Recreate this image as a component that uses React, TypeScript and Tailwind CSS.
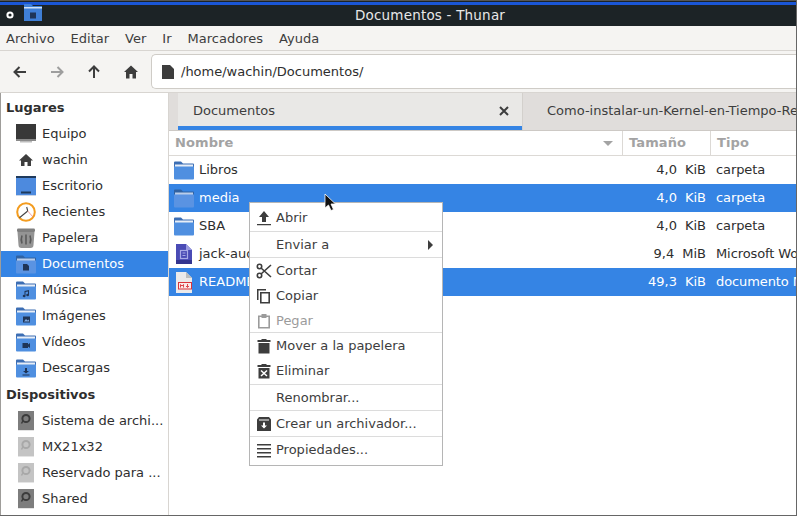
import type { ReactNode } from "react";

const FONT = "font-['DejaVu_Sans',sans-serif]";

const Folder = ({ glyph, dim }: { glyph?: ReactNode; dim?: boolean }) => (
  <svg width="20" height="20" viewBox="0 0 20 20" className="shrink-0">
    <path d="M0 2.5 A1 1 0 0 1 1 1.5 H7 L9 3.5 H19 A1 1 0 0 1 20 4.5 V9 H0 Z" fill={dim ? "#2f62a3" : "#3c6eb4"} />
    <rect x="1" y="4.5" width="18" height="2.5" fill={dim ? "#b9cdea" : "#e8eef7"} />
    <path d="M0 6.5 H20 V18.5 A1 1 0 0 1 19 19.5 H1 A1 1 0 0 1 0 18.5 Z" fill={dim ? "#5a93e2" : "#4f8fe0"} />
    {glyph && <g transform="translate(0 .5)">{glyph}</g>}
  </svg>
);

const DocGlyph = <path d="M7 9.5 H11 L13 11.5 V16 H7 Z" fill="#1f3557" />;
const MusicGlyph = <path d="M8.5 10.5 L13 9.5 V14.5 A1.4 1.2 0 1 1 12 13.4 V11 L9.5 11.5 V15.5 A1.4 1.2 0 1 1 8.5 14.4 Z" fill="#1f3557" />;
const ImageGlyph = <g><rect x="7" y="10" width="7" height="6" fill="#1f3557" /><path d="M8 15 L10 12.5 L11.5 14 L12.5 13 L13.5 15 Z" fill="#7fa8e0" /></g>;
const VideoGlyph = <path d="M6.5 10.5 H12 V12 L14 10.5 V15.5 L12 14 V15.5 H6.5 Z" fill="#1f3557" />;
const DownloadGlyph = <path d="M9 9.5 H11 V12.5 H13 L10 15 L7 12.5 H9 Z M6.5 16 H13.5 V17 H6.5 Z" fill="#1f3557" />;

const Drive = ({ light }: { light?: boolean }) => (
  <svg width="20" height="20" viewBox="0 0 20 20" className="shrink-0">
    <rect x="2" y="0" width="16" height="19" fill={light ? "#c4c4c4" : "#7d7d7d"} />
    <rect x="2" y="19" width="16" height="1" fill="#e4e4e4" />
    <circle cx="10" cy="7.5" r="3.6" fill="none" stroke={light ? "#a8a8a8" : "#3c3c3c"} strokeWidth="2" />
    <path d="M6.8 10 L5.5 12.5" stroke={light ? "#a8a8a8" : "#3c3c3c"} strokeWidth="1.5" />
  </svg>
);

const PlaceIcons: Record<string, ReactNode> = {
  equipo: (
    <svg width="20" height="20" viewBox="0 0 20 20" className="shrink-0">
      <rect y="0" width="20" height="15" fill="#383838" />
      <rect y="15" width="20" height="2" fill="#8a8a8a" />
      <rect x="4" y="17" width="12" height="1.5" fill="#bcbcbc" />
    </svg>
  ),
  home: (
    <svg width="20" height="20" viewBox="0 0 20 20" className="shrink-0">
      <path d="M10 4 L17 10.5 H15 V16 H11.5 V12 H8.5 V16 H5 V10.5 H3 Z" fill="#3e3e3e" />
    </svg>
  ),
  desktop: (
    <svg width="20" height="20" viewBox="0 0 20 20" className="shrink-0">
      <rect width="20" height="19" fill="#4d8ade" />
      <rect width="20" height="2" fill="#1f3a5c" />
      <rect x="5" y="15.5" width="10" height="2" fill="#1f3a5c" />
      <rect y="19" width="20" height="1" fill="#c8d4e6" />
    </svg>
  ),
  recent: (
    <svg width="20" height="20" viewBox="0 0 20 20" className="shrink-0">
      <circle cx="10" cy="10" r="8.8" fill="#fff" stroke="#f39c1f" strokeWidth="2" />
      <path d="M11.7 9 L3.5 15.7 M11.7 9 L10.7 5" stroke="#444" strokeWidth="1.1" />
      <path d="M11.7 9 L17 15" stroke="#e88" strokeWidth="0.8" />
    </svg>
  ),
  trash: (
    <svg width="20" height="20" viewBox="0 0 20 20" className="shrink-0">
      <rect x="1" y="0.5" width="18" height="3.5" rx="1.2" fill="#7f7f7f" />
      <path d="M1.5 4 H18.5 L17.5 17 A3 3 0 0 1 14.5 20 H5.5 A3 3 0 0 1 2.5 17 Z" fill="#949494" />
      <path d="M10 6.5 V16.5 M6 7.5 Q4.5 11.5 6 15.5 M14 7.5 Q15.5 11.5 14 15.5" fill="none" stroke="#5a5a5a" strokeWidth="1.6" />
    </svg>
  ),
};

const places = [
  { label: "Equipo", icon: PlaceIcons.equipo },
  { label: "wachin", icon: PlaceIcons.home },
  { label: "Escritorio", icon: PlaceIcons.desktop },
  { label: "Recientes", icon: PlaceIcons.recent },
  { label: "Papelera", icon: PlaceIcons.trash },
  { label: "Documentos", icon: <Folder dim glyph={DocGlyph} />, active: true },
  { label: "Música", icon: <Folder glyph={MusicGlyph} /> },
  { label: "Imágenes", icon: <Folder glyph={ImageGlyph} /> },
  { label: "Vídeos", icon: <Folder glyph={VideoGlyph} /> },
  { label: "Descargas", icon: <Folder glyph={DownloadGlyph} /> },
];

const devices = [
  { label: "Sistema de archi...", light: false },
  { label: "MX21x32", light: true },
  { label: "Reservado para ...", light: true },
  { label: "Shared", light: false },
];

const DocFile = () => (
  <svg width="20" height="22" viewBox="0 0 20 22" className="shrink-0">
    <path d="M2 1 H12 L18 7 V21 H2 Z" fill="#4a4bb5" />
    <path d="M12 1 L18 7 H12 Z" fill="#9a9be0" />
    <rect x="2" y="17" width="16" height="4" fill="#34358f" />
    <rect x="6.5" y="7.5" width="7" height="8" fill="none" stroke="#a9aae6" strokeWidth="1.2" />
    <path d="M8.5 10 H11.5 M8.5 12.5 H11.5" stroke="#a9aae6" />
  </svg>
);

const MdFile = () => (
  <svg width="20" height="22" viewBox="0 0 20 22" className="shrink-0">
    <path d="M2 1 H12 L18 7 V22 H2 Z" fill="#eceaea" />
    <path d="M12 1 L18 7 H12 Z" fill="#bdbdbd" />
    <rect x="4.5" y="11.5" width="13" height="6.5" fill="#fbeaea" stroke="#d9353b" strokeWidth="1" />
    <path d="M6.5 16.5 V13.5 L8 15 L9.5 13.5 V16.5 M13.5 13 V16 M12 15 L13.5 16.5 L15 15" fill="none" stroke="#d9353b" strokeWidth="0.9" />
  </svg>
);

const files = [
  { name: "Libros", size: "4,0", unit: "KiB", type: "carpeta", icon: <Folder /> },
  { name: "media", size: "4,0", unit: "KiB", type: "carpeta", icon: <Folder dim />, selected: true },
  { name: "SBA", size: "4,0", unit: "KiB", type: "carpeta", icon: <Folder /> },
  { name: "jack-audio", size: "9,4", unit: "MiB", type: "Microsoft Word", icon: <DocFile /> },
  { name: "README.md", size: "49,3", unit: "KiB", type: "documento Markdown", icon: <MdFile />, selected: true },
];

const MenuIcon = ({ children }: { children: ReactNode }) => (
  <svg width="16" height="16" viewBox="0 0 16 16" className="shrink-0" fill="#3d3d3d">
    {children}
  </svg>
);

const MenuItem = ({ icon, label, disabled, arrow, h = "h-[25px]" }: { icon?: ReactNode; label: string; disabled?: boolean; arrow?: boolean; h?: string }) => (
  <div className={`flex items-center ${h} pl-[6px] pr-[9px] ${disabled ? "text-[#9b9b9b]" : "text-[#3d3d3d]"}`}>
    <span className="w-[20px] shrink-0 flex">{icon}</span>
    <span className="flex-1 whitespace-nowrap">{label}</span>
    {arrow && <span className="w-0 h-0 border-y-[5px] border-y-transparent border-l-[5px] border-l-[#3d3d3d]" />}
  </div>
);

const Sep = () => <div className="h-px bg-[#dcdcdc]" />;

const ContextMenu = () => (
  <div className="absolute left-[249px] top-[202px] w-[194px] h-[264px] bg-white border border-[#b5b5b5] text-[13px]">
    <MenuItem
      h="h-[28px] pt-[2px]"
      label="Abrir"
      icon={<MenuIcon><path d="M8 1 L13 7 H10 V12 H6 V7 H3 Z M1 14 H15 V15.3 H1 Z" /></MenuIcon>}
    />
    <Sep />
    <MenuItem label="Enviar a" arrow />
    <Sep />
    <MenuItem
      label="Cortar"
      icon={
        <MenuIcon>
          <g fill="none" stroke="#3d3d3d" strokeWidth="1.6">
            <circle cx="3.5" cy="3.5" r="2.2" />
            <circle cx="3.5" cy="12.5" r="2.2" />
            <path d="M5 5 L15 14 M5 11 L15 2" />
          </g>
        </MenuIcon>
      }
    />
    <MenuItem
      label="Copiar"
      icon={
        <MenuIcon>
          <path d="M1 1 H10 V2.5 H2.5 V12 H1 Z" />
          <path fillRule="evenodd" d="M4 4 H14 V15.5 H4 Z M5.6 5.6 V13.9 H12.4 V5.6 Z" />
        </MenuIcon>
      }
    />
    <MenuItem
      h="h-[24px] pt-[1px]"
      label="Pegar"
      disabled
      icon={
        <MenuIcon>
          <path fill="#9b9b9b" fillRule="evenodd" d="M2 2.5 H5.5 V1 H10.5 V2.5 H14 V15.5 H2 Z M3.6 4 V14 H12.4 V4 H10.5 V5 H5.5 V4 Z" />
        </MenuIcon>
      }
    />
    <Sep />
    <MenuItem
      h="h-[25px] pt-[1px]"
      label="Mover a la papelera"
      icon={<MenuIcon><path d="M5.5 1 H10.5 V2 H14.5 V4 H1.5 V2 H5.5 Z M2.5 5 H13.5 V15.5 H2.5 Z" /></MenuIcon>}
    />
    <MenuItem
      h="h-[26px]"
      label="Eliminar"
      icon={
        <MenuIcon>
          <path d="M5.5 1 H10.5 V2 H14.5 V4 H1.5 V2 H5.5 Z" />
          <path fillRule="evenodd" d="M2.5 5 H13.5 V15.5 H2.5 Z M5.5 7 L4.5 8 L7 10.2 L4.5 12.5 L5.5 13.5 L8 11.2 L10.5 13.5 L11.5 12.5 L9 10.2 L11.5 8 L10.5 7 L8 9.2 Z" />
        </MenuIcon>
      }
    />
    <Sep />
    <MenuItem label="Renombrar..." />
    <Sep />
    <MenuItem
      label="Crear un archivador..."
      icon={
        <MenuIcon>
          <path fillRule="evenodd" d="M3 1 H13 L15 3.5 V15 H1 V3.5 Z M3 3.5 H13 V4.5 H3 Z M7 6.5 V9.5 H5 L8 12.5 L11 9.5 H9 V6.5 Z" />
        </MenuIcon>
      }
    />
    <Sep />
    <MenuItem
      h="h-[28px] pb-[3px]"
      label="Propiedades..."
      icon={<MenuIcon><path d="M1 2 H15 V3.5 H1 Z M1 6 H15 V7.5 H1 Z M1 10 H15 V11.5 H1 Z M1 14 H15 V15.5 H1 Z" /></MenuIcon>}
    />
  </div>
);

export default function App() {
  return (
    <div className={`relative w-[797px] h-[516px] overflow-hidden flex flex-col bg-white border-r border-b border-[#666] text-[13px] ${FONT}`}>
      {/* window frame */}
      <div className="h-[1px] bg-[#555]" />
      <div className="h-[1px] bg-[#1c2326]" />
      <div className="h-[3px] bg-[#1a56d6]" />
      <div className="h-[21px] relative bg-[#1c2326] flex items-center justify-center pl-[64px] text-[#e8e8e8] text-[13.5px]">
        <svg width="10" height="10" viewBox="0 0 10 10" className="absolute left-[5px] top-[5px]">
          <circle cx="5" cy="5" r="2.6" fill="none" stroke="#fff" strokeWidth="2" />
        </svg>
        <svg width="18" height="18" viewBox="0 0 18 18" className="absolute left-[24px] -top-[1px]">
          <path d="M0 0 H7 L9 2 H18 V17 H0 Z" fill="#3f7fd6" />
          <rect x="0" y="3" width="18" height="1.5" fill="#cfe0f5" />
          <rect x="6" y="8.5" width="6" height="6" fill="#1f3557" />
        </svg>
        <span className="tracking-[0.2px]">Documentos - Thunar</span>
      </div>

      {/* menu */}
      <div className="h-[25px] flex items-center gap-[16px] pl-[6px] pt-[1px] bg-[#f5f4f2] text-[#3d3d3d] border-b border-[#d8d5d1]">
        {["Archivo", "Editar", "Ver", "Ir", "Marcadores", "Ayuda"].map((m) => (
          <span key={m}>{m}</span>
        ))}
      </div>

      {/* toolbar */}
      <div className="h-[42px] flex items-center bg-[#f5f4f2] border-b border-[#d8d5d1] pl-[12px]">
        <svg width="16" height="16" viewBox="0 0 16 16" fill="none" stroke="#3d3d3d" strokeWidth="2">
          <path d="M14 8 H3 M7.5 3 L2.5 8 L7.5 13" />
        </svg>
        <svg width="16" height="16" viewBox="0 0 16 16" fill="none" stroke="#9e9e9e" strokeWidth="2" className="ml-[21px]">
          <path d="M2 8 H13 M8.5 3 L13.5 8 L8.5 13" />
        </svg>
        <svg width="16" height="16" viewBox="0 0 16 16" fill="none" stroke="#3d3d3d" strokeWidth="2" className="ml-[21px]">
          <path d="M8 14 V3 M3 7.5 L8 2.5 L13 7.5" />
        </svg>
        <svg width="16" height="16" viewBox="0 0 16 16" fill="#3d3d3d" className="ml-[21px]">
          <path d="M8 1.5 L15 8 H13 V14.5 H9.5 V10 H6.5 V14.5 H3 V8 H1 Z" />
        </svg>
        <div className="ml-[12px] flex-1 h-[35px] flex items-center bg-white border border-r-0 border-[#cfccc7] rounded-l-[5px] pl-[9px] text-[#2e2e2e] text-[13px]">
          <svg width="14" height="16" viewBox="0 0 14 16" fill="#3d3d3d" className="shrink-0">
            <path d="M1 1 H9 L13 5 V15 H1 Z" />
          </svg>
          <span className="ml-[6px]">/home/wachin/Documentos/</span>
        </div>
      </div>

      {/* body */}
      <div className="flex-1 min-h-0 flex">
        {/* sidebar */}
        <div className="w-[169px] shrink-0 pt-[2px] border-l border-r border-[#9f9d9a] border-r-[#d8d5d1] bg-white text-[#2e2e2e]">
          <div className="h-[26px] flex items-center pl-[5px] font-bold">Lugares</div>
          {places.map((p) => (
            <div key={p.label} className={`h-[26px] flex items-center pl-[15px] gap-[6px] ${p.active ? "bg-[#3584e4] text-white" : ""}`}>
              {p.icon}
              <span>{p.label}</span>
            </div>
          ))}
          <div className="h-[27px] flex items-center pl-[5px] font-bold">Dispositivos</div>
          {devices.map((d) => (
            <div key={d.label} className="h-[26px] flex items-center pl-[15px] gap-[6px]">
              <Drive light={d.light} />
              <span className="whitespace-nowrap">{d.label}</span>
            </div>
          ))}
        </div>

        {/* main */}
        <div className="flex-1 min-w-0 flex flex-col">
          <div className="h-[38px] flex bg-[#e0dddb] pl-[9px] border-b border-[#cdc9c5] overflow-hidden">
            <div className="w-[344px] shrink-0 flex items-center justify-between pl-[15px] pr-[13px] pt-[2px] bg-[#e9e8e6] border-b-[4px] border-[#3584e4] text-[#3d3d3d]">
              <span>Documentos</span>
              <svg width="10" height="10" viewBox="0 0 10 10" stroke="#3d3d3d" strokeWidth="2">
                <path d="M1 1 L9 9 M9 1 L1 9" />
              </svg>
            </div>
            <div className="flex items-center pl-[24px] text-[#3d3d3d] whitespace-nowrap border-l border-[#d3d0cc] pb-[2px]">
              Como-instalar-un-Kernel-en-Tiempo-Real
            </div>
          </div>

          <div className="h-[25px] grid grid-cols-[454px_88px_1fr] items-center border-b border-[#dcd9d5] font-bold text-[#a3a3a3] tracking-[0.1px]">
            <div className="h-full flex items-center justify-between pl-[6px] pr-[9px] border-r border-[#dcd9d5]">
              <span>Nombre</span>
              <span className="w-0 h-0 border-x-[5px] border-x-transparent border-t-[5px] border-t-[#a3a3a3]" />
            </div>
            <div className="h-full flex items-center pl-[6px] border-r border-[#dcd9d5]">Tamaño</div>
            <div className="pl-[6px]">Tipo</div>
          </div>

          {files.map((f) => (
            <div key={f.name} className={`h-[28px] grid grid-cols-[454px_88px_1fr] items-center whitespace-nowrap ${f.selected ? "bg-[#3584e4] text-white" : "text-[#2e2e2e]"}`}>
              <div className="flex items-center pl-[5px] gap-[5px]">
                {f.icon}
                <span>{f.name}</span>
              </div>
              <div className="flex justify-end gap-[8px] pr-[5px]">
                <span>{f.size}</span>
                <span>{f.unit}</span>
              </div>
              <div className="pl-[5px] overflow-hidden tracking-[-0.1px]">{f.type}</div>
            </div>
          ))}
        </div>
      </div>

      <ContextMenu />

      {/* pointer */}
      <svg width="14" height="20" viewBox="0 0 14 20" className="absolute left-[324px] top-[193px]">
        <path d="M1 1 V15 L4.5 12 L7 17.5 L9.5 16.5 L7 11 H11.5 Z" fill="#111" stroke="#fff" strokeWidth="0.8" />
      </svg>
    </div>
  );
}
